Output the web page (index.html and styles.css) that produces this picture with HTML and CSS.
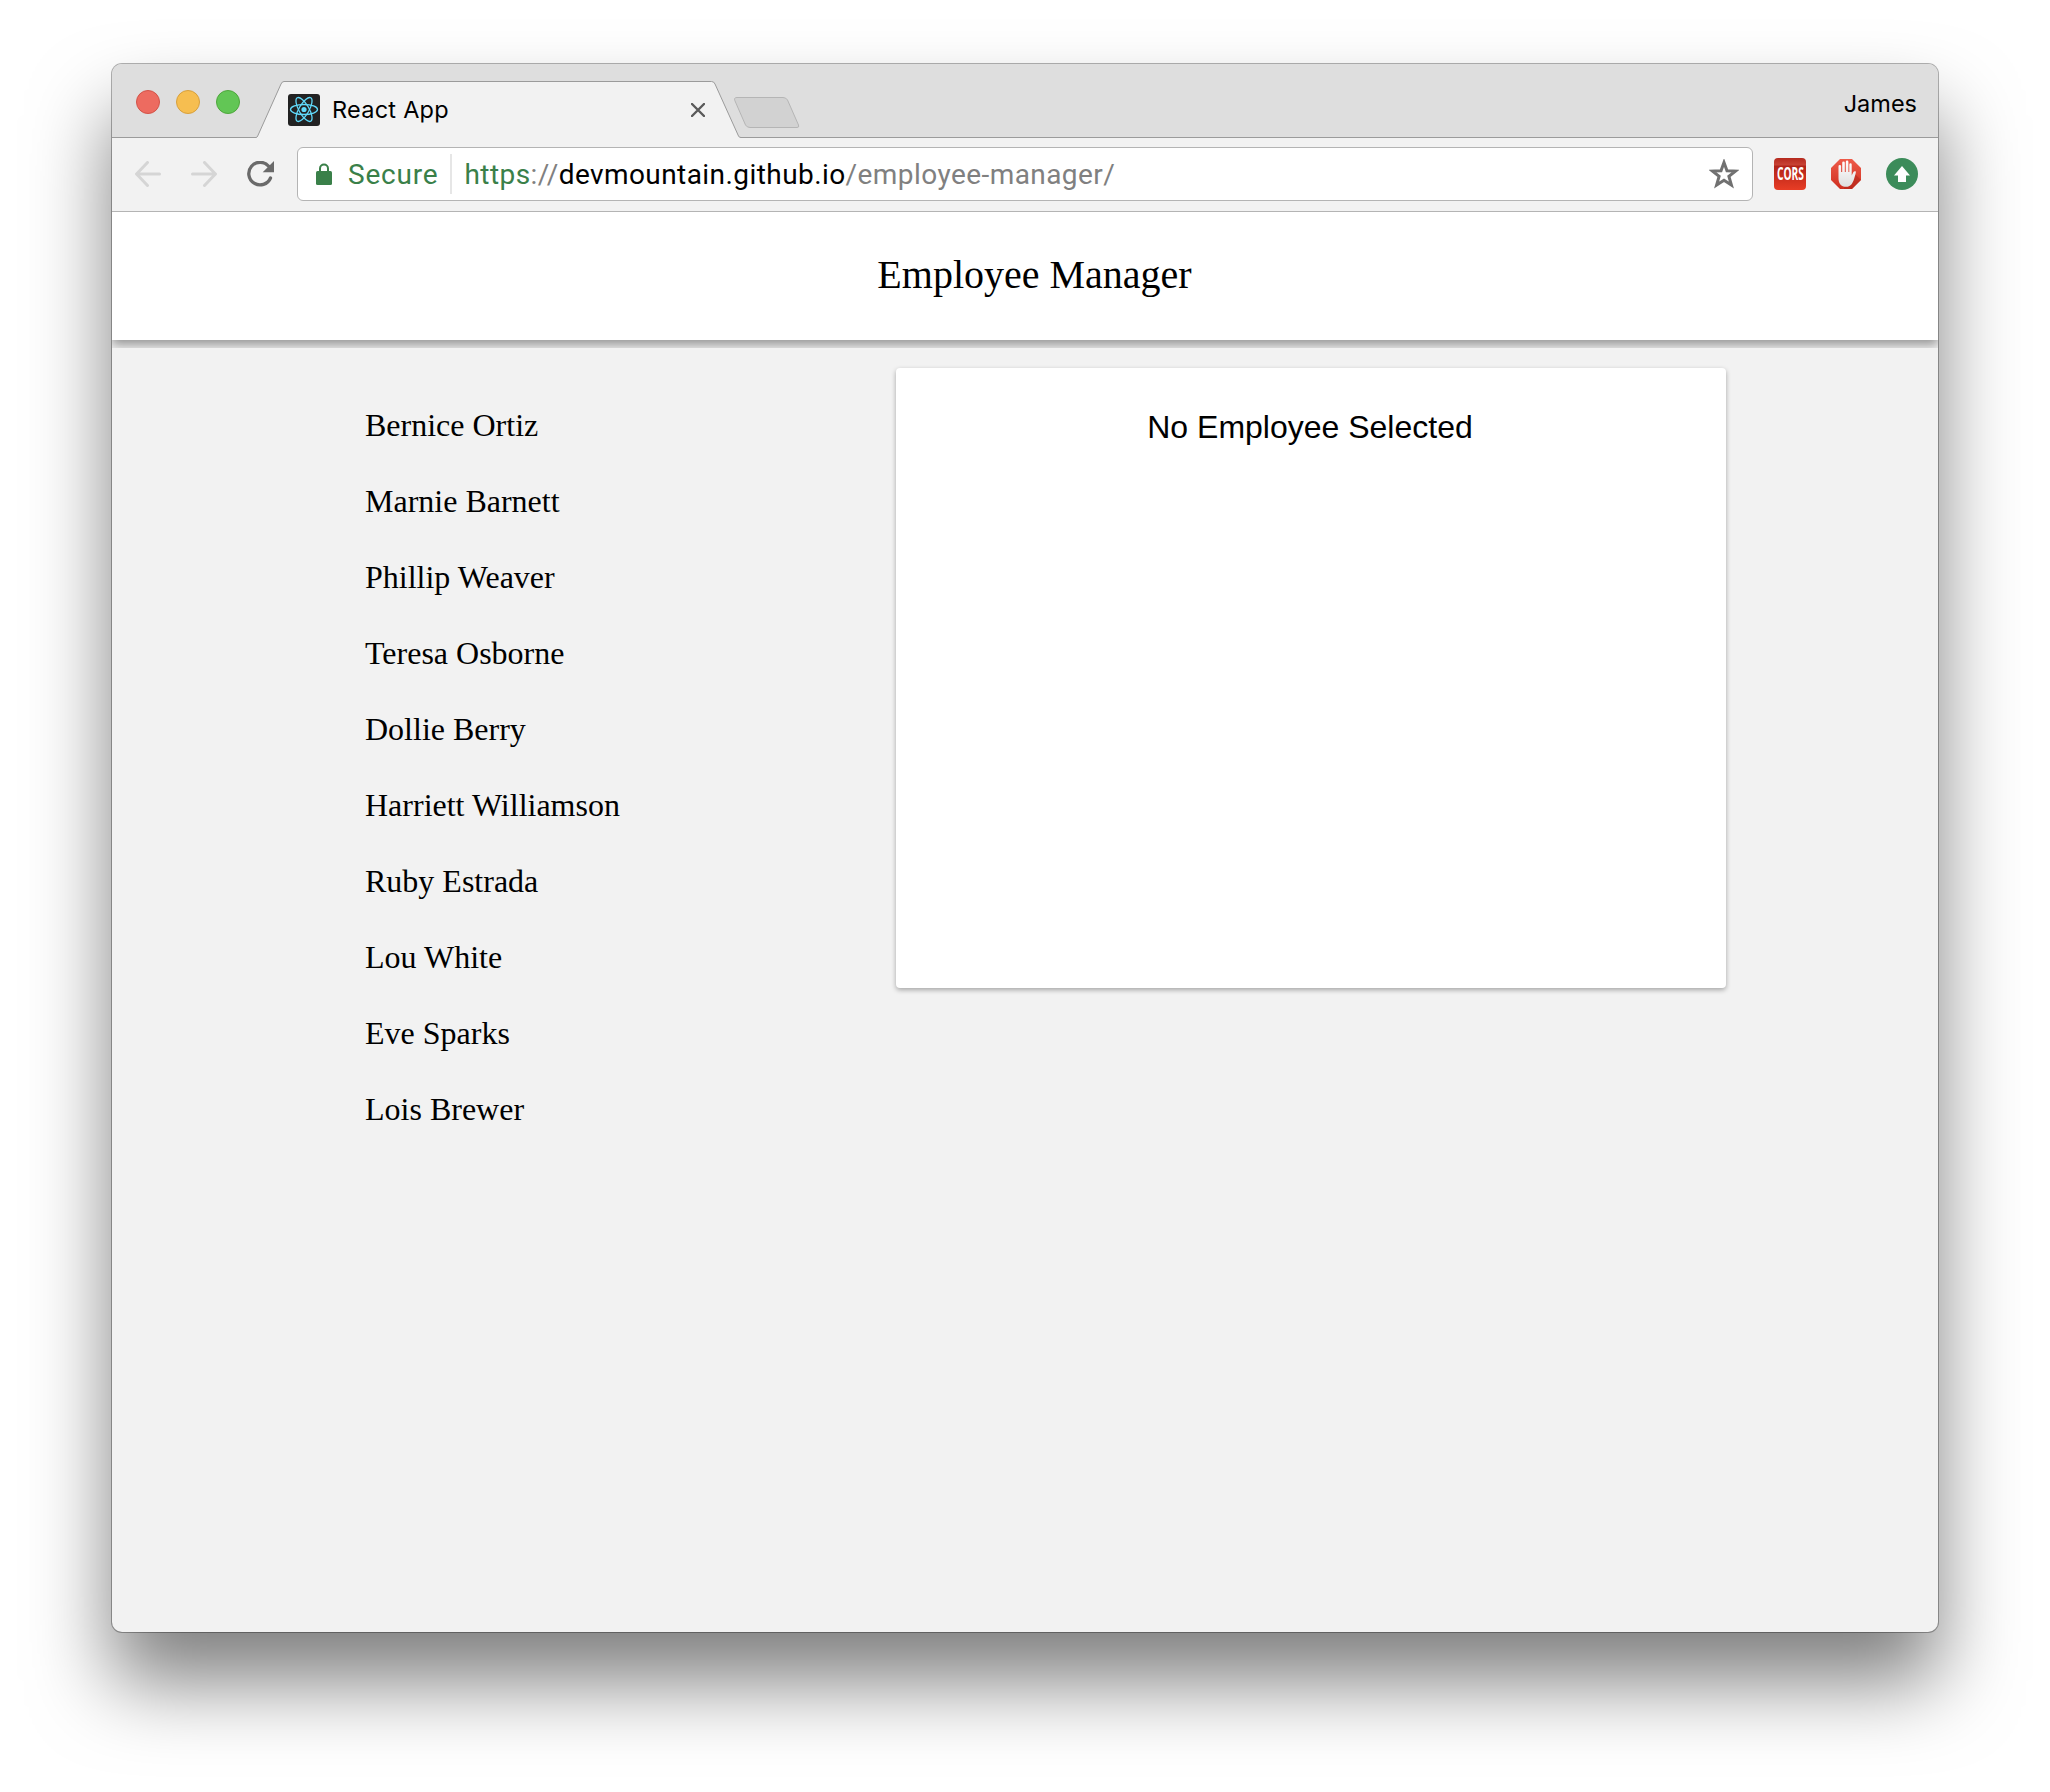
FILE: index.html
```html
<!DOCTYPE html>
<html lang="en">
<head>
<meta charset="utf-8">
<title>React App</title>
<link rel="stylesheet" href="styles.css">
</head>
<body>
<div class="window">
  <div class="tabstrip">
    <div class="lights"><span class="light red"></span><span class="light yellow"></span><span class="light green"></span></div>
    <div class="tab">
      <svg class="tab-shape" width="486" height="58" viewBox="0 0 486 58"><path d="M0 58V56.500H-.5Q1 56.500 1.700 55L25 3Q26 .5 28 .5H455.500Q458 .5 459 3L482.500 55Q483.200 56.500 485 56.500H486V58Z" fill="#f2f2f2"/><path d="M0 56.500Q1 56.500 1.700 55L25 3Q26 .5 28 .5H455.500Q458 .5 459 3L482.500 55Q483.200 56.500 485 56.500H486" fill="none" stroke="#9b9b9b"/></svg>
      <svg class="favicon" width="32" height="32" viewBox="0 0 32 32"><rect width="32" height="32" rx="3" fill="#222"/><g fill="none" stroke="#61dafb" stroke-width="1.300"><ellipse cx="16" cy="15.500" rx="13.500" ry="5"/><ellipse cx="16" cy="15.500" rx="13.500" ry="5" transform="rotate(60 16 15.500)"/><ellipse cx="16" cy="15.500" rx="13.500" ry="5" transform="rotate(120 16 15.500)"/></g><circle cx="16" cy="15.500" r="2.600" fill="#61dafb"/></svg>
      <span class="tab-title">React App</span>
      <svg class="tab-close" width="14" height="14" viewBox="0 0 14 14"><path d="M1 1L13 13M13 1L1 13" stroke="#5a5a5a" stroke-width="2.400" stroke-linecap="round"/></svg>
    </div>
    <svg class="newtab" width="66" height="32" viewBox="0 0 66 32"><path d="M3 .5H49Q52 .5 53.500 3L64.500 28Q65.500 30.500 63 30.500H16Q13 30.500 11.500 28L.8 3.500Q-.3 .5 3 .5Z" fill="#d2d2d2" stroke="#b5b5b5"/></svg>
    <span class="profile">James</span>
  </div>
  <div class="toolbar">
    <svg class="nav" width="26" height="26" viewBox="0 0 26 26"><path d="M12.500 1.500L1.500 13L12.500 24.500M2 13H24.500" fill="none" stroke="#d5d5d5" stroke-width="3" stroke-linecap="round"/></svg>
    <svg class="nav" width="26" height="26" viewBox="0 0 26 26"><path d="M13.500 1.500L24.500 13L13.500 24.500M24 13H1.500" fill="none" stroke="#d5d5d5" stroke-width="3" stroke-linecap="round"/></svg>
    <svg class="nav" width="28" height="26" viewBox="0 0 28 26"><path d="M21.700 5.300A11.300 11.300 0 1 0 23.500 17" fill="none" stroke="#6a6a6a" stroke-width="3.300" stroke-linecap="round"/><path d="M27 0V11.300H15.700Z" fill="#6a6a6a"/></svg>
    <div class="omnibox">
      <svg class="lock" width="16" height="22" viewBox="0 0 16 22"><path d="M4 9V5.500a4 4 0 0 1 8 0V9" fill="none" stroke="#3a8049" stroke-width="2"/><rect y="8" width="16" height="14" rx="1.500" fill="#3a8049"/></svg>
      <span class="secure">Secure</span>
      <span class="divider"></span>
      <span class="url"><span class="scheme">https</span>://<span class="host">devmountain.github.io</span>/employee-manager/</span>
      <svg class="star" width="30" height="30" viewBox="0 0 30 30"><path d="M15 3.500L18 11.800L26.500 12.100L19.900 17.300L22.400 26L15 21.200L7.600 26L10.100 17.300L3.500 12.100L12 11.800Z" fill="none" stroke="#707070" stroke-width="3"/></svg>
    </div>
    <div class="extensions">
      <span class="cors"><span class="cors-text">CORS</span></span>
      <svg width="30" height="30" viewBox="0 0 30 30"><defs><linearGradient id="stop" x2="0" y2="1"><stop stop-color="#ee5b4a"/><stop offset="1" stop-color="#cf2f20"/></linearGradient><linearGradient id="palm" x2="0" y2="1"><stop stop-color="#fff"/><stop offset="1" stop-color="#dedede"/></linearGradient></defs><path d="M9 0H21L30 9V21L21 30H9L0 21V9Z" fill="url(#stop)"/><path d="M13 27L24 15L30 21L21 30H13Z" fill="#a92419" opacity=".45"/><path d="M7.500 16V7.300Q7.500 6 8.800 6T10.100 7.300V13H11.200V3.800Q11.200 2.500 12.500 2.500T13.800 3.800V13H14.800V2.900Q14.800 1.600 16.100 1.600T17.400 2.900V13H18.300V5.500Q18.300 4.200 19.500 4.200T20.700 5.500V16.500L22.300 13.300Q23.200 11.800 25 12.600Q24.800 15 23.200 19.500C21.500 25 19.500 27.800 15.200 27.800C10 27.800 7.500 24.500 7.500 19Z" fill="url(#palm)"/></svg>
      <svg width="32" height="32" viewBox="0 0 32 32"><circle cx="16" cy="16" r="16" fill="#3c8c5a"/><path d="M16 8L24 17.500H20V24H12V17.500H8Z" fill="#fff"/></svg>
    </div>
  </div>
  <div class="page">
    <header class="header"><span class="title">Employee Manager</span></header>
    <main class="main">
      <ul class="employees">
        <li>Bernice Ortiz</li>
        <li>Marnie Barnett</li>
        <li>Phillip Weaver</li>
        <li>Teresa Osborne</li>
        <li>Dollie Berry</li>
        <li>Harriett Williamson</li>
        <li>Ruby Estrada</li>
        <li>Lou White</li>
        <li>Eve Sparks</li>
        <li>Lois Brewer</li>
      </ul>
      <section class="card">No Employee Selected</section>
    </main>
  </div>
</div>
</body>
</html>
```
FILE: styles.css
```css
* { box-sizing: border-box; }
body { margin: 0; padding: 64px 112px 160px; height: 1792px; background: #fff; color: #000; overflow: hidden; }
svg { display: block; flex: none; }

.window {
  display: flex;
  flex-direction: column;
  height: 1568px;
  border-radius: 10px;
  background: #f2f2f2;
  box-shadow: 0 0 0 1px rgba(0, 0, 0, .3), 0 50px 80px rgba(0, 0, 0, .5);
}

/* Tab strip */
.tabstrip {
  display: flex;
  height: 74px;
  padding-left: 24px;
  border-bottom: 1px solid #9b9b9b;
  border-radius: 10px 10px 0 0;
  background: #dedede;
  font-family: Inter, sans-serif;
}
.lights { display: flex; gap: 16px; padding-top: 26px; }
.light { width: 24px; height: 24px; border: 1px solid; border-radius: 50%; }
.red { background: #ed6b60; border-color: #d35348; }
.yellow { background: #f6be50; border-color: #d8a03c; }
.green { background: #62c655; border-color: #4ea73c; }
.tab {
  position: relative;
  display: flex;
  align-items: center;
  width: 486px;
  height: 58px;
  margin: 17px 0 0 16px;
  padding: 0 37px 0 32px;
}
.tab-shape { position: absolute; left: 0; top: 0; }
.favicon, .tab-title, .tab-close { position: relative; }
.tab-title { margin-left: 12px; padding-bottom: 1px; font-size: 23.5px; line-height: 30px; letter-spacing: .25px; }
.tab-close { margin-left: auto; }
.newtab { margin: 33px 0 0 -8px; }
.profile { margin: 25px 21px 0 auto; font-size: 23.5px; line-height: 30px; }

/* Toolbar */
.toolbar {
  display: flex;
  align-items: center;
  height: 74px;
  padding: 0 20px 2px 23px;
  border-bottom: 1px solid #b4b4b4;
}
.nav { margin-right: 30px; }
.omnibox {
  display: flex;
  align-items: center;
  flex: 1;
  height: 54px;
  margin-left: -8px;
  padding: 0 13px 0 18px;
  border: 1px solid #b4b4b4;
  border-radius: 6px;
  background: #fff;
  font: 28px/40px Roboto, sans-serif;
}
.secure, .url { padding-top: 2px; }
.secure { margin-left: 16px; color: #3a8049; letter-spacing: .8px; }
.divider { width: 2px; height: 40px; margin: 0 12px; background: #e6e6e6; }
.url { color: #808080; letter-spacing: .43px; }
.scheme { color: #3a8049; }
.host { color: #000; }
.star { margin-left: auto; }
.extensions { display: flex; align-items: center; gap: 25px; margin-left: 21px; }
.cors {
  display: flex;
  align-items: center;
  justify-content: center;
  width: 32px;
  height: 32px;
  border-radius: 4px;
  background: linear-gradient(#b52a1e 0, #c84335 22%, #b02318 25%, #e83d25);
}
.cors-text { color: #fff; font: bold 17px/20px "Open Sans", sans-serif; transform: scaleX(.6); }

/* Page */
.page { flex: 1; overflow: hidden; border-radius: 0 0 10px 10px; font-family: "Liberation Serif", serif; }
.header {
  display: flex;
  justify-content: center;
  height: 128px;
  padding: 40px 0 0 19px;
  background: #fff;
  box-shadow: 0 5px 10px rgba(0, 0, 0, .38);
}
.title { font-size: 40px; line-height: 46px; }
.main {
  position: relative;
  display: flex;
  margin-top: 8px;
  padding: 20px 212px 0 253px;
  background: #f2f2f2;
}
.employees { flex: 1; margin: 0; padding: 19px 0 0; list-style: none; font-size: 32px; line-height: 76px; }
.card {
  width: 830px;
  height: 620px;
  padding: 40px 2px 0 0;
  border-radius: 4px;
  background: #fff;
  box-shadow: 0 2px 5px rgba(0, 0, 0, .32);
  font: 32px/38px "Liberation Sans", sans-serif;
  text-align: center;
}
```
